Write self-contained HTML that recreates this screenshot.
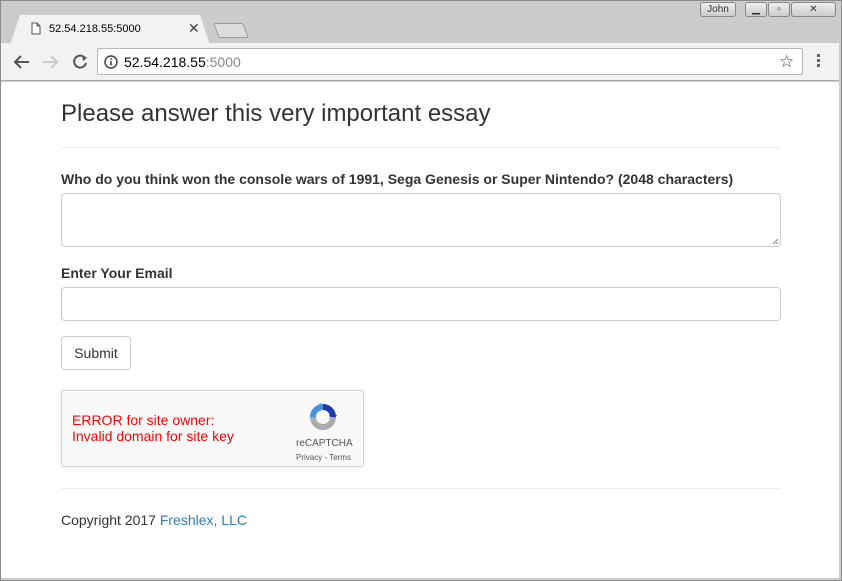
<!DOCTYPE html>
<html><head><style>
*{box-sizing:border-box}
body{margin:0;width:842px;height:581px;overflow:hidden;font-family:"Liberation Sans",sans-serif;background:#cfcfcf;position:relative}
.frame{position:absolute;left:0;top:0;width:842px;height:581px;border:1px solid #8a8a8a;background:#ccc}
.tab{position:absolute;left:10px;top:15px;width:200px;height:30px;background:#f2f2f2;clip-path:polygon(0 100%,10px 0,190px 0,100% 100%)}
.tabtxt{position:absolute;left:49px;top:23px;font-size:11px;color:#000}
.tabx{position:absolute;left:188px;top:20px;font-size:14px;color:#444}
.newtab{position:absolute;left:216px;top:23px;width:30px;height:15px;border:1px solid #999;background:#ddd;transform:skewX(20deg);border-radius:2px}
.winbtn{position:absolute;top:2px;height:15px;border:1px solid #888;border-radius:3px;background:linear-gradient(#eee,#ccc);font-size:10px;text-align:center;color:#333;line-height:13px}
.toolbar{position:absolute;left:1px;top:43px;width:838px;height:38px;background:#f2f2f2;border-bottom:1px solid #aaa}
.omni{position:absolute;left:97px;top:48px;width:706px;height:27px;background:#fff;border:1px solid #b8b8b8;border-radius:2px;font-size:14px;line-height:26px;padding-left:26px;color:#000}
.page{position:absolute;left:1px;top:82px;width:838px;height:496px;background:#fff}
.c{position:absolute;left:60px;width:720px}
h1{font-weight:normal;font-size:24px;color:#333;margin:0}
.lbl{font-weight:bold;font-size:14px;color:#333}
.inp{border:1px solid #ccc;border-radius:4px;background:#fff}
hr{border:0;border-top:1px solid #eee;margin:0}
</style></head><body>
<div class="frame"></div>
<div class="tab"></div>
<svg style="position:absolute;left:31px;top:22px" width="10" height="13"><path d="M1 1H6L9 4V12H1Z M6 1V4H9" fill="#fff" stroke="#555"/></svg>
<div class="tabtxt">52.54.218.55:5000</div>
<div class="tabx">✕</div>
<div class="newtab"></div>
<div class="winbtn" style="left:700px;width:36px">John</div>
<div class="winbtn" style="left:745px;width:22px">▁</div>
<div class="winbtn" style="left:768px;width:22px">▫</div>
<div class="winbtn" style="left:791px;width:45px">✕</div>
<div class="toolbar"></div>
<svg style="position:absolute;left:12px;top:53px" width="80" height="18"><path d="M17 9H4M9 3L3 9L9 15" stroke="#555" stroke-width="2" fill="none"/><path d="M31 9H44M39 3L45 9L39 15" stroke="#ccc" stroke-width="2" fill="none"/><path d="M73 5A6 6 0 1 0 74 10" stroke="#555" stroke-width="2" fill="none"/><path d="M70 2L75 5L71 8Z" fill="#555"/></svg>
<div class="omni">52.54.218.55<span style="color:#888">:5000</span></div>
<svg style="position:absolute;left:104px;top:55px" width="14" height="14"><circle cx="7" cy="7" r="6" fill="none" stroke="#444" stroke-width="1.5"/><rect x="6.2" y="6" width="1.6" height="4.5" fill="#444"/><rect x="6.2" y="3.3" width="1.6" height="1.6" fill="#444"/></svg>
<div style="position:absolute;left:779px;top:52px;font-size:17px;color:#444">☆</div>
<div style="position:absolute;left:817px;top:54px;width:3px;font-size:0">
<div style="width:3px;height:3px;background:#666;margin-bottom:2px"></div><div style="width:3px;height:3px;background:#666;margin-bottom:2px"></div><div style="width:3px;height:3px;background:#666"></div></div>
<div class="page">
<div class="c" style="top:18px"><h1>Please answer this very important essay</h1></div>
<div class="c" style="top:65px"><hr></div>
<div class="c lbl" style="top:89px">Who do you think won the console wars of 1991, Sega Genesis or Super Nintendo? (2048 characters)</div>
<div class="c inp" style="top:111px;height:54px"><svg style="position:absolute;right:1px;bottom:1px" width="7" height="7"><path d="M1 6L6 1M4 6L6 4" stroke="#888"/></svg></div>
<div class="c lbl" style="top:183px">Enter Your Email</div>
<div class="c inp" style="top:205px;height:34px"></div>
<div style="position:absolute;left:60px;top:254px;width:70px;height:34px;border:1px solid #ccc;border-radius:4px;font-size:14px;color:#333;text-align:center;line-height:32px">Submit</div>
<div style="position:absolute;left:60px;top:308px;width:303px;height:77px;border:1px solid #d3d3d3;border-radius:3px;background:#f9f9f9;box-shadow:0 0 3px rgba(0,0,0,.1)">
<div style="position:absolute;left:10px;top:21px;font-size:14px;color:#f00;line-height:16px">ERROR for site owner:<br>Invalid domain for site key</div>
<svg style="position:absolute;left:245px;top:10px" width="32" height="32">
<path d="M16 6A10 10 0 0 1 26 16" stroke="#1c3aa9" stroke-width="6" fill="none"/><path d="M22 14L30 14L26 20Z" fill="#1c3aa9"/>
<path d="M6 16A10 10 0 0 1 16 6" stroke="#4a90e2" stroke-width="6" fill="none"/><path d="M14 2V10L8 6Z" fill="#4a90e2"/>
<path d="M6 16A10 10 0 0 0 26 16" stroke="#ababab" stroke-width="6" fill="none"/></svg>
<div style="position:absolute;left:234px;top:47px;font-size:10px;color:#555">reCAPTCHA</div>
<div style="position:absolute;left:234px;top:62px;font-size:8px;color:#555">Privacy - Terms</div>
</div>
<div class="c" style="top:406px"><hr></div>
<div class="c" style="top:430px;font-size:14px;color:#333">Copyright 2017 <span style="color:#337ab7">Freshlex, LLC</span></div>
</div>
</body></html>
